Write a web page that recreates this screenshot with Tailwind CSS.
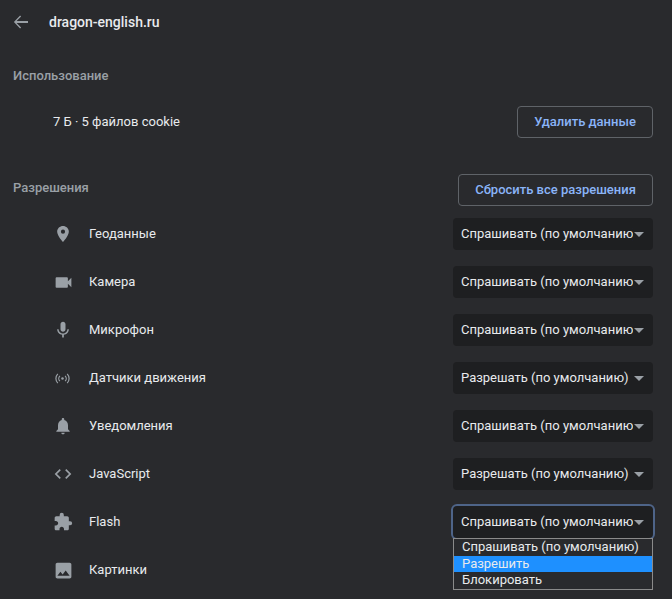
<!DOCTYPE html>
<html><head><meta charset="utf-8"><script src="https://cdn.jsdelivr.net/npm/@tailwindcss/browser@4"></script></head>
<body class="m-0 bg-[#292a2d]">
<div class="relative h-[599px] w-[672px] overflow-hidden bg-[#292a2d] font-['Roboto',sans-serif] text-[13px] text-[#e8eaed]">
  <div class="flex h-[44px] items-center pl-[13px]">
    <svg class="h-[16px] w-[16px] fill-[#9aa0a6]" viewBox="0 0 16 16"><path d="M15 7.1H3.6l4.5-4.6L7.1 1.5 0.9 8l6.2 6.5 1-1-4.5-4.6H15z"/></svg>
    <span class="ml-[20px] text-[14px] font-medium text-[#e8eaed]">dragon-english.ru</span>
  </div>
  <div class="mt-[22px] h-[20px] pl-[13px] font-medium leading-[20px] text-[#9aa0a6]">Использование</div>
  <div class="mt-[20px] flex h-[32px] items-center justify-between pl-[53px] pr-[19px]">
    <span>7 Б · 5 файлов cookie</span>
    <button class="h-[32px] w-[136px] rounded-[4px] border border-[#5f6368] font-medium text-[#8ab4f8]">Удалить данные</button>
  </div>
  <div class="mt-[36px] flex h-[32px] items-center justify-between pl-[13px] pr-[19px]">
    <span class="mb-[4px] font-medium text-[#9aa0a6]">Разрешения</span>
    <button class="h-[32px] w-[195px] rounded-[4px] border border-[#5f6368] font-medium text-[#8ab4f8]">Сбросить все разрешения</button>
  </div>
  <div class="mt-[12px] flex flex-col gap-[16px] pl-[53px] pr-[19px]">
    <div class="flex h-[32px] items-center">
      <svg class="h-[20px] w-[20px] fill-[#9aa0a6]" viewBox="0 0 24 24"><path d="M12 2.5C8.4 2.5 5 5.4 5 9.2c0 4.8 7 12.3 7 12.3s7-7.500 7-12.300C19 5.400 15.600 2.500 12 2.500zm0 9.200a2.500 2.500 0 0 1 0-5 2.500 2.500 0 0 1 0 5z"/></svg>
      <span class="ml-[16px]">Геоданные</span>
      <div class="ml-auto flex h-[32px] w-[200px] items-center rounded-[4px] bg-[#1e1f21] pl-[8px] pr-[9px]"><span class="w-[172px] overflow-hidden whitespace-nowrap">Спрашивать (по умолчанию)</span><span class="ml-auto h-0 w-0 border-x-[5px] border-t-[5px] border-x-transparent border-t-[#9aa0a6]"></span></div>
    </div>
    <div class="flex h-[32px] items-center">
      <svg class="-mx-[0.5px] h-[21px] w-[21px] fill-[#9aa0a6]" viewBox="0 0 24 24"><path d="M17 10.5V7c0-.55-.45-1-1-1H4c-.55 0-1 .45-1 1v10c0 .55.45 1 1 1h12c.55 0 1-.45 1-1v-3.500l4 4v-11l-4 4z"/></svg>
      <span class="ml-[16px]">Камера</span>
      <div class="ml-auto flex h-[32px] w-[200px] items-center rounded-[4px] bg-[#1e1f21] pl-[8px] pr-[9px]"><span class="w-[172px] overflow-hidden whitespace-nowrap">Спрашивать (по умолчанию)</span><span class="ml-auto h-0 w-0 border-x-[5px] border-t-[5px] border-x-transparent border-t-[#9aa0a6]"></span></div>
    </div>
    <div class="flex h-[32px] items-center">
      <svg class="h-[20px] w-[20px] fill-[#9aa0a6]" viewBox="0 0 24 24"><path d="M12 14c1.66 0 2.99-1.34 2.99-3L15 5c0-1.66-1.34-3-3-3S9 3.34 9 5v6c0 1.66 1.34 3 3 3zm5.3-3c0 3-2.54 5.1-5.3 5.1S6.7 14 6.7 11H5c0 3.41 2.72 6.23 6 6.72V21h2v-3.28c3.28-.48 6-3.3 6-6.72h-1.7z"/></svg>
      <span class="ml-[16px]">Микрофон</span>
      <div class="ml-auto flex h-[32px] w-[200px] items-center rounded-[4px] bg-[#1e1f21] pl-[8px] pr-[9px]"><span class="w-[172px] overflow-hidden whitespace-nowrap">Спрашивать (по умолчанию)</span><span class="ml-auto h-0 w-0 border-x-[5px] border-t-[5px] border-x-transparent border-t-[#9aa0a6]"></span></div>
    </div>
    <div class="flex h-[32px] items-center">
      <svg class="ml-[0.5px] mr-[2.5px] h-[17px] w-[17px] fill-none stroke-[#9aa0a6] stroke-[1.7]" viewBox="0 0 24 24"><circle cx="12" cy="12" r="1.8" class="fill-[#9aa0a6] stroke-none"/><path d="M8.3 8.2a5.400 5.400 0 0 0 0 7.600M15.700 8.200a5.400 5.400 0 0 1 0 7.600M5.400 5.400a9.400 9.400 0 0 0 0 13.200M18.600 5.400a9.400 9.400 0 0 1 0 13.200"/></svg>
      <span class="ml-[16px]">Датчики движения</span>
      <div class="ml-auto flex h-[32px] w-[200px] items-center rounded-[4px] bg-[#1e1f21] pl-[8px] pr-[9px]"><span class="whitespace-nowrap">Разрешать (по умолчанию)</span><span class="ml-auto h-0 w-0 border-x-[5px] border-t-[5px] border-x-transparent border-t-[#9aa0a6]"></span></div>
    </div>
    <div class="flex h-[32px] items-center">
      <svg class="h-[20px] w-[20px] fill-[#9aa0a6]" viewBox="0 0 24 24"><path d="M12 22c1.1 0 2-.9 2-2h-4c0 1.1.9 2 2 2zm6-6v-5c0-3.07-1.63-5.64-4.5-6.32V4c0-.83-.67-1.500-1.500-1.500s-1.500.67-1.500 1.500v.68C7.64 5.360 6 7.920 6 11v5l-2 2v1h16v-1l-2-2z"/></svg>
      <span class="ml-[16px]">Уведомления</span>
      <div class="ml-auto flex h-[32px] w-[200px] items-center rounded-[4px] bg-[#1e1f21] pl-[8px] pr-[9px]"><span class="w-[172px] overflow-hidden whitespace-nowrap">Спрашивать (по умолчанию)</span><span class="ml-auto h-0 w-0 border-x-[5px] border-t-[5px] border-x-transparent border-t-[#9aa0a6]"></span></div>
    </div>
    <div class="flex h-[32px] items-center">
      <svg class="h-[20px] w-[20px] fill-[#9aa0a6]" viewBox="0 0 24 24"><path d="M9.4 16.6 4.8 12l4.600-4.600L8 6l-6 6 6 6 1.400-1.400zm5.200 0 4.600-4.600-4.600-4.600L16 6l6 6-6 6-1.400-1.400z"/></svg>
      <span class="ml-[16px]">JavaScript</span>
      <div class="ml-auto flex h-[32px] w-[200px] items-center rounded-[4px] bg-[#1e1f21] pl-[8px] pr-[9px]"><span class="whitespace-nowrap">Разрешать (по умолчанию)</span><span class="ml-auto h-0 w-0 border-x-[5px] border-t-[5px] border-x-transparent border-t-[#9aa0a6]"></span></div>
    </div>
    <div class="flex h-[32px] items-center">
      <svg class="h-[20px] w-[20px] fill-[#9aa0a6]" viewBox="0 0 24 24"><path d="M20.5 11H19V7c0-1.100-.9-2-2-2h-4V3.500a2.500 2.500 0 0 0-5 0V5H4c-1.100 0-1.990.9-1.990 2v3.800H3.500c1.490 0 2.700 1.210 2.700 2.700s-1.210 2.700-2.700 2.700H2V20c0 1.100.9 2 2 2h3.800v-1.500c0-1.490 1.210-2.700 2.700-2.700s2.700 1.210 2.700 2.700V22H17c1.100 0 2-.9 2-2v-4h1.500a2.500 2.500 0 0 0 0-5z"/></svg>
      <span class="ml-[16px]">Flash</span>
      <div class="ml-auto flex h-[32px] w-[200px] items-center rounded-[4px] bg-[#1e1f21] pl-[8px] pr-[9px] ring-2 ring-[#4e6488]"><span class="w-[172px] overflow-hidden whitespace-nowrap">Спрашивать (по умолчанию)</span><span class="ml-auto h-0 w-0 border-x-[5px] border-t-[5px] border-x-transparent border-t-[#9aa0a6]"></span></div>
    </div>
    <div class="flex h-[32px] items-center">
      <svg class="-mx-[0.5px] h-[21px] w-[21px] fill-[#9aa0a6]" viewBox="0 0 24 24"><path d="M21 19V5c0-1.100-.9-2-2-2H5c-1.100 0-2 .9-2 2v14c0 1.100.9 2 2 2h14c1.100 0 2-.9 2-2zM8.500 13.500l2.500 3 3.500-4.500 4.500 6H5l3.500-4.500z"/></svg>
      <span class="ml-[16px]">Картинки</span>
    </div>
  </div>
  <div class="absolute left-[453px] top-[538px] w-[200px] border border-[#8a8a8a] bg-[#292a2d] text-[13px] leading-[16px]">
    <div class="h-[17px] pl-[8px]">Спрашивать (по умолчанию)</div>
    <div class="h-[16px] bg-[#1e90ff] pl-[8px]">Разрешить</div>
    <div class="h-[17px] pl-[8px]">Блокировать</div>
  </div>
</div>
</body></html>
